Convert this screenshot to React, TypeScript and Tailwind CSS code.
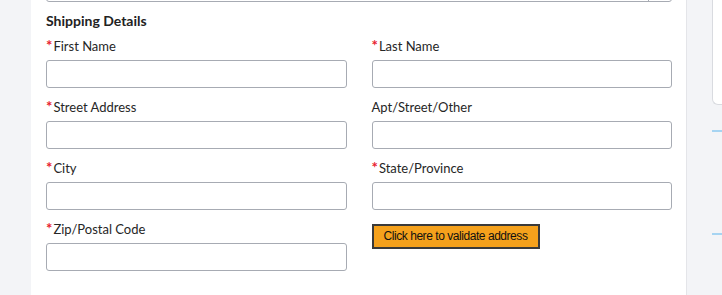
import React from "react";

type Field = { label: string; required?: boolean };

const rows: [Field, Field | null][] = [
  [{ label: "First Name", required: true }, { label: "Last Name", required: true }],
  [{ label: "Street Address", required: true }, { label: "Apt/Street/Other" }],
  [{ label: "City", required: true }, { label: "State/Province", required: true }],
  [{ label: "Zip/Postal Code", required: true }, null],
];

function TextField({ field }: { field: Field }) {
  return (
    <div className="flex flex-col">
      <label className="h-[18px] leading-[18px] text-[13px] text-[#262626] flex items-start">
        {field.required && (
          <span className="text-[#e8202e] text-[15px] font-bold leading-[16px] mr-[1px]">*</span>
        )}
        {field.label}
      </label>
      <input
        type="text"
        className="mt-[5px] h-[28px] w-full rounded-[3px] border border-[#a7abb3] bg-white px-2 text-[13px] outline-none"
      />
    </div>
  );
}

export default function App() {
  return (
    <div className="flex h-[295px] w-[722px] overflow-hidden bg-[#f3f4f7] font-['Lato','Liberation_Sans',sans-serif]">
      {/* left gutter */}
      <div className="w-[31px] shrink-0" />

      {/* form panel */}
      <div className="w-[656px] shrink-0 bg-white border-r border-[#e4e5e9] pl-[15px] pr-[14px]">
        {/* select box from previous section, scrolled off */}
        <div className="-mt-[28px] flex h-[30px] rounded-[3px] border border-[#a7abb3]">
          <div className="flex-1" />
          <div className="w-[23px] border-l border-[#a7abb3]" />
        </div>

        <h2 className="mt-[9px] h-[20px] leading-[20px] text-[14px] font-bold text-[#222]">Shipping Details</h2>

        <div className="mt-[6px] grid grid-cols-2 gap-x-[25px] gap-y-[10px]">
          {rows.map(([a, b], i) => (
            <React.Fragment key={i}>
              <TextField field={a} />
              {b ? (
                <TextField field={b} />
              ) : (
                <div className="pt-[2px]">
                  <button className="h-[25px] w-[168px] border-2 border-[#3a3a3a] bg-[#f5a11c] text-[12px] tracking-[-0.45px] text-[#111] font-['Liberation_Sans',Arial,sans-serif]">
                    Click here to validate address
                  </button>
                </div>
              )}
            </React.Fragment>
          ))}
        </div>
      </div>

      {/* right column */}
      <div className="flex-1 pl-[25px] flex flex-col">
        <div className="-mt-[10px] h-[115px] rounded-bl-[6px] border border-r-0 border-[#d9dbe0] bg-white" />
        <div className="mt-[25px] h-[2px] bg-[#a6d4f2]" />
        <div className="mt-[101px] h-[2px] bg-[#a6d4f2]" />
      </div>
    </div>
  );
}
